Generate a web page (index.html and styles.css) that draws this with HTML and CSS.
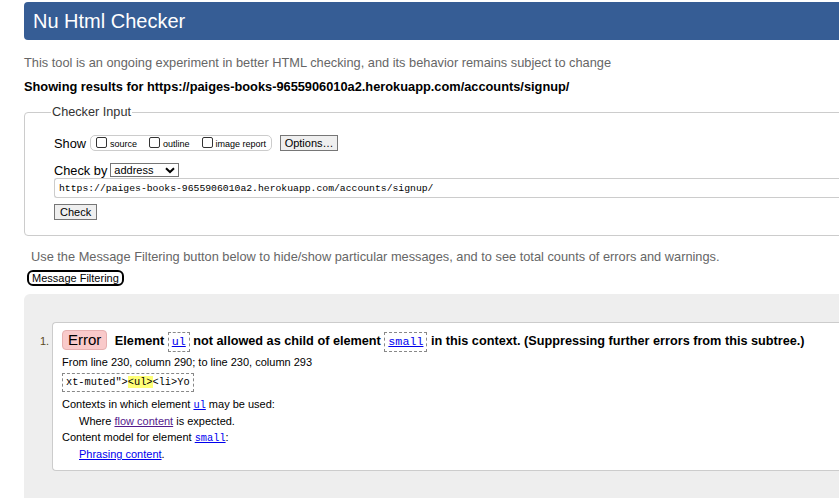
FILE: index.html
```html
<!DOCTYPE html>
<html lang="en">
<head>
<meta charset="utf-8">
<title>Nu Html Checker</title>
<link rel="stylesheet" href="styles.css">
</head>
<body>
<div class="page">
  <header class="masthead"><h1>Nu Html Checker</h1></header>
  <p class="intro">This tool is an ongoing experiment in better HTML checking, and its behavior remains subject to change</p>
  <p class="showing">Showing results for https://paiges-books-9655906010a2.herokuapp.com/accounts/signup/</p>

  <fieldset class="checker">
    <legend>Checker Input</legend>
    <div class="show-row">
      <span class="lbl">Show</span>
      <span class="opts">
        <label class="opt"><span class="box"></span>source</label>
        <label class="opt"><span class="box"></span>outline</label>
        <label class="opt"><span class="box"></span>image report</label>
      </span>
      <span class="btn">Options…</span>
    </div>
    <div class="by-row">
      <span class="lbl">Check by</span>
      <span class="select">address<svg width="10" height="7" viewBox="0 0 10 7"><path d="M1 1.2 L5 5 L9 1.2" fill="none" stroke="#000" stroke-width="2"/></svg></span>
    </div>
    <div class="doc">https://paiges-books-9655906010a2.herokuapp.com/accounts/signup/</div>
    <span class="btn check">Check</span>
  </fieldset>

  <p class="filter-note">Use the Message Filtering button below to hide/show particular messages, and to see total counts of errors and warnings.</p>
  <span class="filter-btn">Message Filtering</span>

  <section class="results">
    <ol class="msgs">
      <li class="msg">
        <p class="headline"><span class="badge">Error</span> Element <code class="tag"><a href="#">ul</a></code> not allowed as child of element <code class="tag"><a href="#">small</a></code> in this context. (Suppressing further errors from this subtree.)</p>
        <p class="loc">From line 230, column 290; to line 230, column 293</p>
        <p><code class="extract">xt-muted"&gt;<b>&lt;ul&gt;</b>&lt;li&gt;Yo</code></p>
        <p class="info first">Contexts in which element <a href="#" class="mono">ul</a> may be used:</p>
        <p class="info ind">Where <a href="#" class="visited">flow content</a> is expected.</p>
        <p class="info">Content model for element <a href="#" class="mono">small</a>:</p>
        <p class="info ind"><a href="#">Phrasing content</a>.</p>
      </li>
    </ol>
  </section>
</div>
</body>
</html>
```

FILE: styles.css
```css
html, body { overflow: hidden; }
body {
  margin: 0;
  font-family: "Liberation Sans", Arial, sans-serif;
  color: #000;
  background: #fff;
}
.page {
  width: 900px;
  padding: 2px 0 0 24px;
}
.masthead {
  background: #365d95;
  height: 38px;
  border-radius: 4px 0 0 4px;
  display: flex;
  align-items: center;
  padding-left: 9px;
}
.masthead h1 {
  margin: 0;
  font-size: 20px;
  font-weight: normal;
  color: #fff;
}
.intro {
  margin: 15px 0 0;
  font-size: 12.8px;
  line-height: 15px;
  color: #666;
}
.showing {
  margin: 9px 0 0;
  font-size: 12.8px;
  line-height: 15px;
  font-weight: bold;
}
.checker {
  margin: 10px 0 0;
  border: 1px solid #ccc;
  border-radius: 4px 0 0 4px;
  padding: 14px 0 15px 29px;
  min-width: 0;
}
.checker legend {
  font-size: 12.7px;
  color: #333;
  padding: 0 1px;
  margin-left: -3px;
  line-height: 16px;
}
.show-row, .by-row {
  display: flex;
  align-items: center;
  font-size: 12.8px;
}
.show-row { height: 18px; }
.lbl { color: #000; }
.opts {
  display: flex;
  align-items: center;
  border: 1px solid #ccc;
  border-radius: 5px;
  height: 14px;
  margin-left: 4px;
  padding: 0 5px 0 5px;
  gap: 12px;
  font-size: 9px;
}
.opt {
  display: flex;
  align-items: center;
  gap: 3px;
  padding-top: 2px;
}
.box {
  width: 9px;
  height: 9px;
  border: 1px solid #333;
  border-radius: 2px;
  margin-top: -4px;
}
.btn {
  display: inline-flex;
  align-items: center;
  justify-content: center;
  background: #efefef;
  border: 1px solid #767676;
  font-size: 11px;
  height: 14px;
  padding: 0 5px;
}
.show-row .btn { margin-left: 8px; width: 46px; }
.by-row { margin-top: 10px; height: 16px; }
.select {
  margin-left: 3px;
  display: inline-flex;
  align-items: center;
  justify-content: space-between;
  width: 61px;
  height: 12px;
  border: 1px solid #767676;
  padding: 0 3px 0 3px;
  font-size: 11px;
}
.doc {
  height: 18px;
  border: 1px solid #ccc;
  border-right: none;
  border-radius: 3px 0 0 3px;
  font-family: "Liberation Mono", monospace;
  font-size: 9.75px;
  display: flex;
  align-items: center;
  padding-left: 4px;
}
.btn.check { margin-top: 6px; height: 14px; padding: 0 5px; }
.filter-note {
  margin: 13px 0 0 7px;
  font-size: 12.8px;
  line-height: 15px;
  color: #666;
}
.filter-btn {
  display: inline-block;
  margin: 6px 0 0 3px;
  border: 2px solid #000;
  border-radius: 6px;
  font-size: 11px;
  line-height: 12px;
  padding: 0 3px;
  color: #000;
}
.results {
  margin-top: 8px;
  background: #eee;
  border-radius: 6px 0 0 0;
  padding: 28px 0 40px 28px;
}
.msgs {
  margin: 0;
  padding: 0;
  list-style: none;
}
.msg {
  position: relative;
  background: #fff;
  border: 1px solid #ccc;
  border-right: none;
  border-radius: 4px 0 0 4px;
  padding: 7px 0 8px 9px;
}
.msg::before {
  content: "1.";
  position: absolute;
  left: -13px;
  top: 12px;
  font-size: 11px;
  color: #5a4a1e;
}
.msg p { margin: 0; }
.headline {
  font-size: 12.7px;
  font-weight: bold;
  line-height: 20px;
}
.badge {
  display: inline-block;
  background: #f9caca;
  border: 1px solid #e6b0b0;
  border-radius: 4px;
  font-weight: normal;
  font-size: 15px;
  line-height: 18px;
  padding: 0 5px;
  margin-right: 4px;
}
.tag {
  display: inline-block;
  border: 1px dashed #888;
  padding: 0 3px;
  line-height: 18px;
  font-weight: normal;
  font-size: 11.7px;
}
code, .mono {
  font-family: "Liberation Mono", monospace;
}
.extract, .mono { font-size: 10.3px; }
a { color: #00e; }
a.visited { color: #551a8b; }
.loc {
  font-size: 11px;
  line-height: 14px;
  margin-top: 3px !important;
}
.extract {
  display: inline-block;
  margin-top: 4px;
  border: 1px dashed #888;
  padding: 1px 3px;
  line-height: 15px;
}
.extract b {
  font-weight: normal;
  background: #ff7;
}
.info {
  font-size: 11px;
  line-height: 16.6px;
}
.info a { line-height: 1; }
.info.first { margin-top: 4px !important; }
.ind { padding-left: 17px; }
```
